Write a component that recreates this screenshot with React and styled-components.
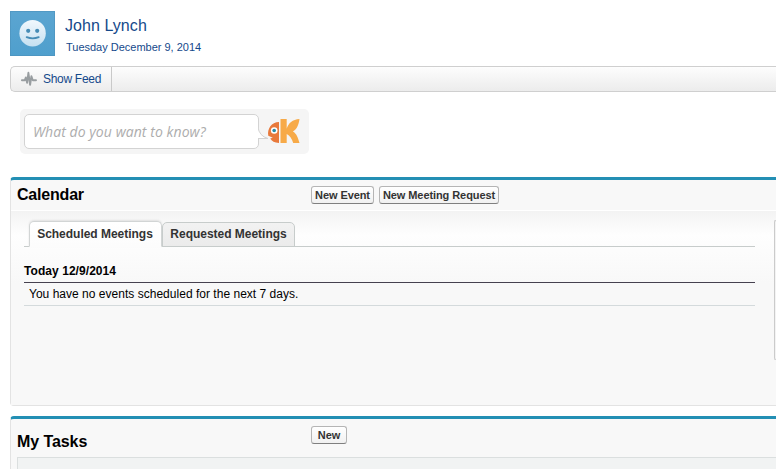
import React from "react";
import styled, { createGlobalStyle } from "styled-components";

const GlobalStyle = createGlobalStyle`
  *, *::before, *::after { box-sizing: border-box; }
  html, body { margin: 0; padding: 0; background: #fff; overflow: hidden; }
  body { font-family: "Liberation Sans", Arial, sans-serif; color: #000; }
`;

const Page = styled.main`
  width: 776px;
  height: 469px;
  overflow: hidden;
  padding: 11px 0 0 10px;
  background: #fff;
`;

const Profile = styled.header`
  display: flex;
  height: 55px;
  gap: 10px;
`;

const Avatar = styled.svg`
  display: block;
  width: 45px;
  height: 45px;
`;

const Identity = styled.div`
  display: flex;
  flex-direction: column;
  color: #15498b;
  white-space: nowrap;
`;

const UserName = styled.h1`
  margin: 5px 0 0;
  font-size: 16px;
  font-weight: 400;
  line-height: 20px;
  letter-spacing: 0.06px;
`;

const Today = styled.span`
  margin: 4px 0 0 1px;
  font-size: 11px;
  line-height: 14px;
  letter-spacing: -0.01px;
`;

const FeedBar = styled.nav`
  display: flex;
  height: 26px;
  border: 1px solid #cfcfcf;
  border-right: 0;
  border-radius: 5px 0 0 5px;
  background: linear-gradient(#fdfdfd, #ececec);
`;

const FeedButton = styled.button`
  display: flex;
  align-items: center;
  gap: 6px;
  width: 101px;
  padding: 0 0 0 10px;
  border: 0;
  border-right: 1px solid #c9c9c9;
  background: none;
  color: #15498b;
  font: 12px "Liberation Sans", Arial, sans-serif;
  letter-spacing: -0.3px;
  white-space: nowrap;
`;

const SearchBox = styled.section`
  display: flex;
  width: 289px;
  height: 45px;
  margin: 17px 0 0 10px;
  padding: 5px 0 0 4px;
  border-radius: 5px;
  background: #f5f5f5;
`;

const SearchField = styled.div`
  width: 235px;
  height: 35px;
  padding-left: 8px;
  border: 1px solid #d3d3d3;
  border-radius: 5px;
  background: #fff;
  color: #adadad;
  font: italic 14px/33px "Open Sans", "Noto Sans", sans-serif;
  letter-spacing: 0.07px;
  white-space: nowrap;
`;

const FishLogo = styled.svg`
  display: block;
  width: 44px;
  height: 35px;
  margin-left: -2px;
`;

const Panel = styled.section`
  height: ${(p) => p.$height}px;
  margin-top: ${(p) => p.$gap}px;
  border: 1px solid #e3e3e3;
  border-top: 3px solid #238fb4;
  border-right: 0;
  border-radius: 4px 0 0 4px;
  background: #f8f8f8;
`;

const PanelHeader = styled.div`
  display: flex;
  height: ${(p) => p.$height}px;
  padding-left: 6px;
  border-bottom: ${(p) => (p.$ruled ? "1px solid #fff" : "0")};
`;

const PanelTitle = styled.h2`
  width: 294px;
  margin: ${(p) => p.$top}px 0 0;
  font-size: 16px;
  line-height: 18px;
  letter-spacing: ${(p) => p.$tracking}px;
`;

const Actions = styled.div`
  display: flex;
  gap: 5px;
  margin-top: ${(p) => p.$top}px;
`;

const Button = styled.button`
  width: ${(p) => p.$width}px;
  height: 18px;
  padding: 0;
  border: 1px solid #b5b5b5;
  border-bottom-color: #7f7f7f;
  border-radius: 3px;
  background: linear-gradient(#fff, #f1f1f1);
  color: #333;
  font: bold 11px/16px "Liberation Sans", Arial, sans-serif;
  letter-spacing: -0.08px;
  white-space: nowrap;
`;

const CalendarBody = styled.div`
  display: flex;
  gap: 19px;
  height: 194px;
  padding: 9px 0 0 13px;
  background: linear-gradient(#f3f3f3 0, #fefefe 24px, #f8f8f8 72px);
`;

const Schedule = styled.div`
  width: 731px;
`;

const Tabs = styled.div`
  display: flex;
  align-items: flex-end;
  height: 27px;
  padding-left: 5px;
  border-bottom: 1px solid #c7cccb;
`;

const Tab = styled.button`
  width: 133px;
  height: ${(p) => (p.$active ? 26 : 25)}px;
  margin-bottom: -1px;
  padding: 0 ${(p) => (p.$active ? 1 : 0)}px ${(p) => (p.$active ? 0 : 2)}px 0;
  border: 1px solid ${(p) => (p.$active ? "#d2d5d5" : "#c7cccb")};
  border-bottom-color: ${(p) => (p.$active ? "#fcfcfc" : "#c7cccb")};
  border-radius: 5px 5px 0 0;
  background: ${(p) => (p.$active ? "linear-gradient(#fff, #fcfcfc)" : "linear-gradient(#f2f2f2, #ebebeb)")};
  box-shadow: ${(p) => (p.$active ? "0 -1px 2px #e0e0e0" : "none")};
  color: #333;
  font: bold 12px/22px "Liberation Sans", Arial, sans-serif;
  letter-spacing: -0.02px;
  white-space: nowrap;
`;

const DayHeading = styled.h3`
  height: 36px;
  margin: 0;
  padding-top: 16px;
  border-bottom: 1px solid #46414f;
  font-size: 12px;
  line-height: 16px;
  letter-spacing: 0.06px;
`;

const EventRow = styled.p`
  height: 23px;
  margin: 0;
  padding-left: 5px;
  border-bottom: 1px solid #d4dadc;
  font-size: 12px;
  line-height: 22px;
  letter-spacing: 0.02px;
`;

const SideCard = styled.div`
  flex: 1;
  height: 140px;
  border: 1px solid #cbcbcb;
  border-right: 0;
  border-radius: 4px 0 0 4px;
  background: #f3f3f3;
`;

const TaskList = styled.div`
  height: 30px;
  margin-left: 6px;
  border: 1px solid #dbdfdf;
  border-right: 0;
  background: #f1f3f3;
`;

function Smile() {
  return (
    <Avatar viewBox="0 0 45 45" aria-label="Profile photo">
      <defs>
        <linearGradient id="sky" x1="0" y1="0" x2="0" y2="1">
          <stop stopColor="#5ba5d1" />
          <stop offset="1" stopColor="#4f9fcd" />
        </linearGradient>
        <linearGradient id="face" x1="0" y1="0" x2="0" y2="1">
          <stop stopColor="#f1f8fd" />
          <stop offset="1" stopColor="#c5e0f1" />
        </linearGradient>
      </defs>
      <rect width="45" height="45" fill="url(#sky)" />
      <rect x=".5" y=".5" width="44" height="44" fill="none" stroke="#4c91ba" strokeOpacity=".6" />
      <circle cx="22.6" cy="22.2" r="13.2" fill="url(#face)" />
      <g fill="#458cb6">
        <circle cx="18.2" cy="19.8" r="2.1" />
        <circle cx="27.2" cy="19.8" r="2.1" />
      </g>
      <path d="M16.7 26.2Q22.7 28.6 28.7 26.2" fill="none" stroke="#458cb6" strokeWidth="1.9" strokeLinecap="round" />
    </Avatar>
  );
}

function Pulse() {
  return (
    <svg width="16" height="16" viewBox="0 0 16 16" fill="none" stroke="#989da0" strokeWidth="1.9" strokeLinecap="round" strokeLinejoin="round">
      <path d="M.9 9.2H3.8L4.8 6.5 6.1 11.8 7.4 1.8 9.1 13.8 10.4 5.2 11.8 9.2H15" />
    </svg>
  );
}

function Fish() {
  return (
    <FishLogo viewBox="0 0 44 35" aria-label="K">
      <path d="M1 13Q2 22 11 24.5H1" fill="#fff" stroke="#d3d3d3" />
      <path d="M0 10H1V25H0Z" fill="#fff" />
      <path d="M22 8V29C17.5 29 14.8 27.4 13.2 24.6L15.8 23.7 11.3 21.8C10 15 14.5 8 22 8Z" fill="#e8793b" />
      <circle cx="17.2" cy="16.5" r="3.3" fill="#fff" />
      <circle cx="17.2" cy="16.5" r="1.8" fill="#2789a8" />
      <path d="M23.5 5H29.7V14.8C31.3 9 35.5 5.5 42.5 5C41.6 11 39.8 15.3 35.9 17.4C39.5 19.4 41 23.5 42.5 29H36.2C34.8 25 33 21.5 29.7 20V29H23.5Z" fill="#f7aa48" />
    </FishLogo>
  );
}

export default function App() {
  return (
    <>
      <GlobalStyle />
      <Page>
        <Profile>
          <Smile />
          <Identity>
            <UserName>John Lynch</UserName>
            <Today>Tuesday December 9, 2014</Today>
          </Identity>
        </Profile>
        <FeedBar>
          <FeedButton><Pulse />Show Feed</FeedButton>
        </FeedBar>
        <SearchBox>
          <SearchField>What do you want to know?</SearchField>
          <Fish />
        </SearchBox>
        <Panel $height={229} $gap={23}>
          <PanelHeader $height={31} $ruled>
            <PanelTitle $top={6} $tracking={-0.2}>Calendar</PanelTitle>
            <Actions $top={6}>
              <Button $width={63}>New Event</Button>
              <Button $width={120}>New Meeting Request</Button>
            </Actions>
          </PanelHeader>
          <CalendarBody>
            <Schedule>
              <Tabs>
                <Tab $active>Scheduled Meetings</Tab>
                <Tab>Requested Meetings</Tab>
              </Tabs>
              <DayHeading>Today 12/9/2014</DayHeading>
              <EventRow>You have no events scheduled for the next 7 days.</EventRow>
            </Schedule>
            <SideCard />
          </CalendarBody>
        </Panel>
        <Panel $height={80} $gap={10}>
          <PanelHeader $height={38}>
            <PanelTitle $top={14} $tracking={-0.08}>My Tasks</PanelTitle>
            <Actions $top={7}>
              <Button $width={36}>New</Button>
            </Actions>
          </PanelHeader>
          <TaskList />
        </Panel>
      </Page>
    </>
  );
}
